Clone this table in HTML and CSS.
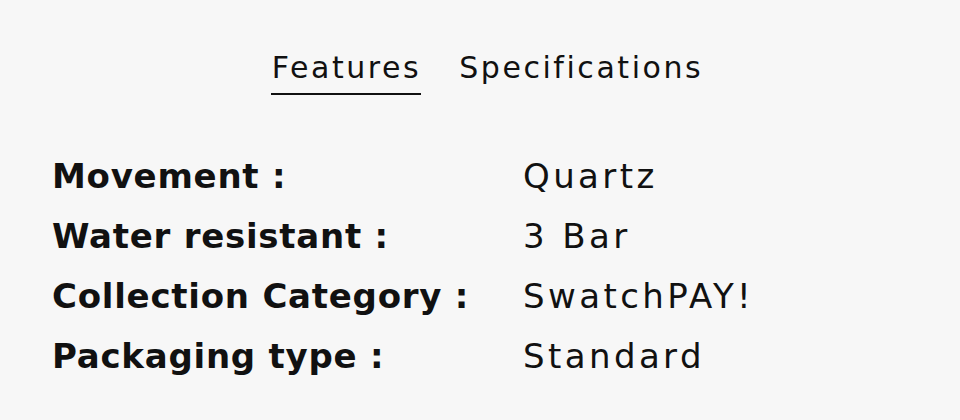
FILE: index.html
```html
<!DOCTYPE html>
<html lang="en">
<head>
<meta charset="utf-8">
<title>Specifications</title>
<link rel="stylesheet" href="styles.css">
</head>
<body>
<main class="panel">
  <nav class="tabs">
    <span class="tab tab-active">Features</span>
    <span class="tab">Specifications</span>
  </nav>
  <dl class="specs">
    <dt>Movement :</dt><dd>Quartz</dd>
    <dt>Water resistant :</dt><dd>3 Bar</dd>
    <dt>Collection Category :</dt><dd>SwatchPAY!</dd>
    <dt>Packaging type :</dt><dd>Standard</dd>
  </dl>
</main>
</body>
</html>
```
FILE: styles.css
```css
html, body {
  margin: 0;
  padding: 0;
  background: #f7f7f7;
}
body {
  font-family: "DejaVu Sans", "Noto Sans", sans-serif;
  color: #111;
  width: 960px;
  height: 420px;
  overflow: hidden;
}
.panel {
  padding-top: 50px;
}
.tabs {
  display: flex;
  justify-content: center;
  gap: 37px;
  padding-left: 14px;
}
.tab {
  font-size: 30px;
  line-height: 36px;
  letter-spacing: 2.55px;
  padding: 0 0 7px 1px;
  border-bottom: 2px solid transparent;
}
.tab-active {
  border-bottom-color: #111;
}
.specs {
  display: grid;
  grid-template-columns: 471px 1fr;
  margin: 51px 0 0;
  padding-left: 52px;
}
.specs dt {
  font-weight: 700;
  font-size: 34px;
  line-height: 60px;
  letter-spacing: 0.75px;
}
.specs dd {
  margin: 0;
  font-size: 34px;
  line-height: 60px;
  letter-spacing: 3.4px;
}
```
